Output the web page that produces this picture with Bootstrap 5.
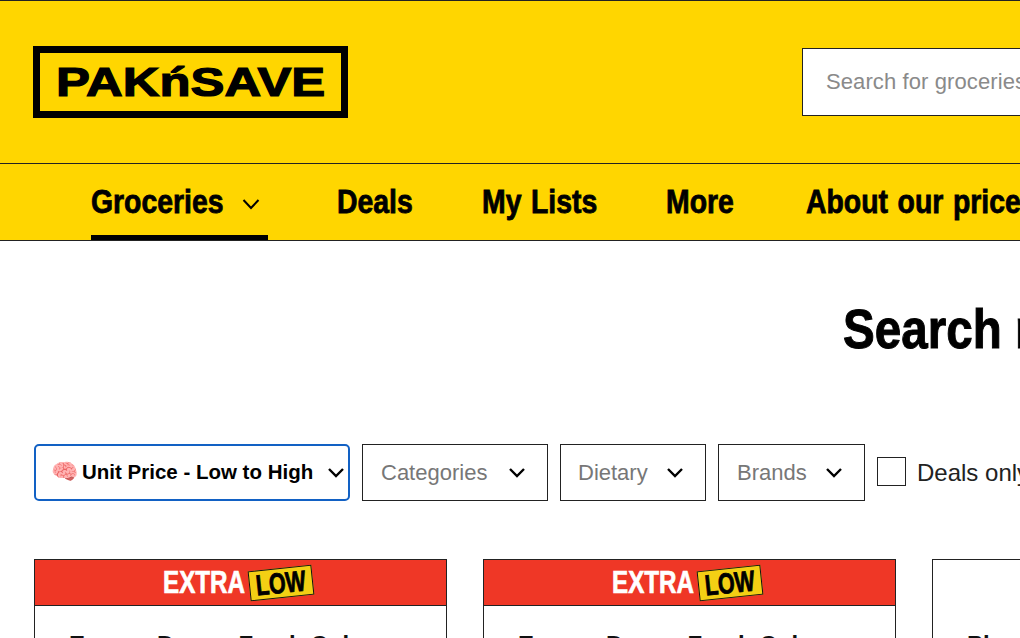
<!DOCTYPE html>
<html>
<head>
    <title>PAK'nSAVE Search</title>
    <link rel="stylesheet" href="https://cdn.jsdelivr.net/npm/bootstrap@5.3.0/dist/css/bootstrap.min.css">
    <style>
        html, body { height: 638px; overflow: hidden; background: #fff; }
        body { font-family: "Liberation Sans", Arial, sans-serif; color: #111; }
        .page-wrap { width: 1500px; }
        .squeeze { display: inline-block; transform-origin: left center; white-space: nowrap; }
        .top-bar { background: #ffd600; height: 164px; border-top: 1px solid #222; border-bottom: 1px solid #222; padding: 0 33px; }
        .logo-box { width: 315px; height: 72px; border: 7px solid #000; overflow: hidden; }
        .logo-text { font-size: 41px; font-weight: 700; line-height: 1; color: #000; -webkit-text-stroke: 1.2px #000; transform: scaleX(1.24); white-space: nowrap; }
        .search-box { width: 600px; height: 68px; margin-left: 454px; margin-top: -1px; background: #fff; border: 1px solid #222; padding: 0 23px; font-size: 22px; letter-spacing: .1px; color: #8a8a8a; }
        .nav-bar { background: #ffd600; height: 77px; border-bottom: 1px solid #222; padding-left: 91px; gap: 69px; }
        .nav-item-x { font-weight: 700; font-size: 33px; line-height: 1; color: #000; height: 76px; padding-top: 21px; white-space: nowrap; word-spacing: 2px; }
        .nav-item-x .squeeze { transform: scaleX(.86); -webkit-text-stroke: .8px #000; }
        .nav-item-x:nth-child(2) { width: 76px; }
        .nav-item-x:nth-child(3) { width: 115px; }
        .nav-item-x:nth-child(4) { width: 71px; }
        .nav-active { width: 177px; border-bottom: 5px solid #000; }
        .nav-active .squeeze { width: 150px; }
        .nav-chevron { flex: none; margin-top: 9px; }
        .title-row { padding: 58px 0 0 843px; height: 203px; }
        .page-title { font-weight: 700; font-size: 56px; line-height: 60px; color: #000; margin: 0; transform: scaleX(.85); -webkit-text-stroke: 1px #000; }
        .filter-row { padding-left: 34px; gap: 12px; height: 115px; }
        .filter-box { height: 57px; border: 1px solid #222; padding: 0 21px 0 18px; font-size: 22px; color: #777; white-space: nowrap; }
        .filter-box svg { flex: none; }
        .filter-cat { width: 186px; }
        .filter-diet { width: 146px; padding-left: 17px; }
        .filter-brand { width: 147px; }
        .sort-box { width: 316px; border: 2px solid #1261c4; border-radius: 5px; padding: 0 3px 0 15px; color: #000; font-weight: 700; font-size: 20.5px; line-height: 1.4; }
        .brain { font-family: "Noto Sans", sans-serif; font-size: 22px; line-height: 1; margin-right: 4px; }
        .deals-wrap { height: 57px; }
        .check-box { width: 29px; height: 29px; border: 1px solid #222; margin-top: -3px; margin-right: 11px; }
        .deals-label { font-size: 24px; color: #222; white-space: nowrap; }
        .card-row { padding-left: 34px; gap: 36px; }
        .deal-card { width: 413px; height: 200px; border: 1px solid #222; flex: none; }
        .extra-head { background: #ef3726; height: 46px; border-bottom: 1px solid #222; padding-right: 5px; }
        .extra-text { width: 86px; font-weight: 700; font-size: 31px; color: #fff; line-height: 1; transform: scaleX(.78); -webkit-text-stroke: .7px #fff; }
        .low-tag { width: 64px; height: 30px; background: #f3d014; border: 1.5px solid #111; color: #000; font-weight: 700; line-height: 1; transform: rotate(-6deg); overflow: hidden; }
        .low-text { font-size: 29px; transform: scaleX(.74); transform-origin: center; -webkit-text-stroke: .8px #000; }
        .card-name { padding: 21px 34px 0; font-size: 24px; font-weight: 700; color: #111; white-space: nowrap; }
        .card-name-plain { padding-top: 67px; }
    </style>
</head>
<body>
    <div class="page-wrap">
        <header class="top-bar d-flex align-items-center">
            <div class="logo-box d-flex align-items-center justify-content-center flex-shrink-0">
                <span class="logo-text">PAKńSAVE</span>
            </div>
            <div class="search-box d-flex align-items-center">Search for groceries</div>
        </header>

        <nav class="nav-bar d-flex">
            <div class="nav-item-x nav-active d-flex align-items-start">
                <span class="squeeze">Groceries</span>
                <svg class="nav-chevron" width="20" height="20" viewBox="0 0 20 20" fill="none" stroke="#000" stroke-width="2"><path d="M2.5 6l7.5 8 7.5-8"/></svg>
            </div>
            <div class="nav-item-x"><span class="squeeze">Deals</span></div>
            <div class="nav-item-x"><span class="squeeze">My Lists</span></div>
            <div class="nav-item-x"><span class="squeeze">More</span></div>
            <div class="nav-item-x"><span class="squeeze">About our prices</span></div>
        </nav>

        <div class="title-row">
            <h1 class="page-title squeeze">Search results</h1>
        </div>

        <div class="filter-row d-flex align-items-start">
            <div class="filter-box sort-box d-flex align-items-center justify-content-between">
                <span><span class="brain">🧠</span>Unit Price - Low to High</span>
                <svg width="18" height="18" viewBox="0 0 18 18" fill="none" stroke="#000" stroke-width="2.4"><path d="M2 5l7 7 7-7"/></svg>
            </div>
            <div class="filter-box filter-cat d-flex align-items-center justify-content-between">
                <span>Categories</span>
                <svg width="18" height="18" viewBox="0 0 18 18" fill="none" stroke="#000" stroke-width="2.4"><path d="M2 5l7 7 7-7"/></svg>
            </div>
            <div class="filter-box filter-diet d-flex align-items-center justify-content-between">
                <span>Dietary</span>
                <svg width="18" height="18" viewBox="0 0 18 18" fill="none" stroke="#000" stroke-width="2.4"><path d="M2 5l7 7 7-7"/></svg>
            </div>
            <div class="filter-box filter-brand d-flex align-items-center justify-content-between">
                <span>Brands</span>
                <svg width="18" height="18" viewBox="0 0 18 18" fill="none" stroke="#000" stroke-width="2.4"><path d="M2 5l7 7 7-7"/></svg>
            </div>
            <div class="deals-wrap d-flex align-items-center">
                <div class="check-box"></div>
                <span class="deals-label">Deals only</span>
            </div>
        </div>

        <div class="card-row d-flex">
            <div class="deal-card">
                <div class="extra-head d-flex align-items-center justify-content-center">
                    <span class="extra-text squeeze">EXTRA</span>
                    <span class="low-tag d-flex align-items-center justify-content-center"><span class="low-text squeeze">LOW</span></span>
                </div>
                <div class="card-name">Energy Dream Fresh Cola</div>
            </div>
            <div class="deal-card">
                <div class="extra-head d-flex align-items-center justify-content-center">
                    <span class="extra-text squeeze">EXTRA</span>
                    <span class="low-tag d-flex align-items-center justify-content-center"><span class="low-text squeeze">LOW</span></span>
                </div>
                <div class="card-name">Energy Dream Fresh Cola</div>
            </div>
            <div class="deal-card">
                <div class="card-name card-name-plain">Plant Cola</div>
            </div>
        </div>
    </div>
</body>
</html>
